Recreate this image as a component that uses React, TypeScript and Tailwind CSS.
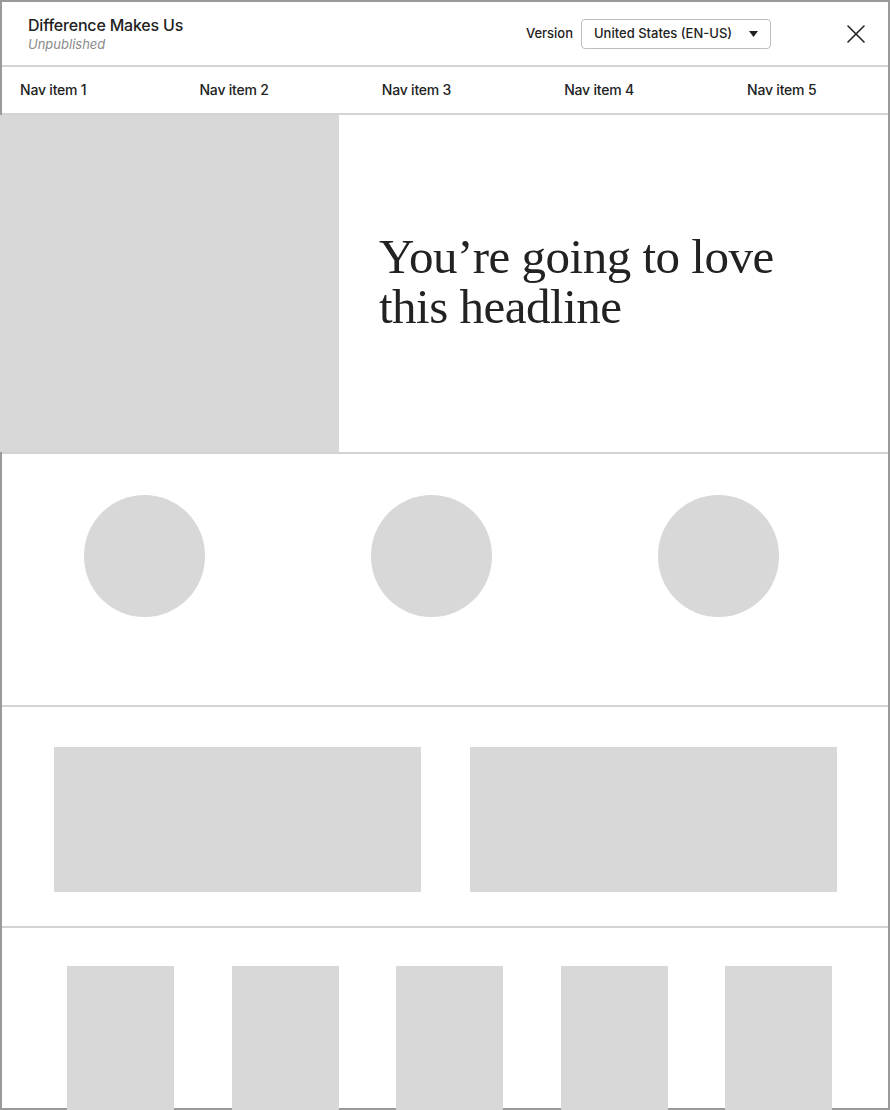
import { X } from 'lucide-react';

const navItems = ['Nav item 1', 'Nav item 2', 'Nav item 3', 'Nav item 4', 'Nav item 5'];

export default function App() {
  return (
    <div className="w-[890px] h-[1110px] overflow-hidden bg-white font-['Inter','Liberation_Sans',sans-serif] text-[#222]">
      <div className="h-[1110px] border-2 border-[#9a9a9a] flex flex-col">
        {/* Header */}
        <div className="h-[65px] shrink-0 flex items-center justify-between pl-[26px] pr-[16px] border-b-2 border-[#d3d3d3]">
          <div className="flex flex-col pt-[1px]">
            <span className="text-[16px] leading-[20px] font-medium tracking-[-0.2px]">Difference Makes Us</span>
            <span className="text-[13px] leading-[19px] italic text-[#8a8a8a]">Unpublished</span>
          </div>
          <div className="flex items-center">
            <span className="text-[13px] font-medium mr-[8px] ml-[1px]">Version</span>
            <div className="w-[190px] h-[30px] border-[1.5px] border-[#bdbdbd] rounded-[4px] flex items-center justify-between pl-[12px] pr-[12px]">
              <span className="text-[13px] font-medium">United States (EN-US)</span>
              <svg width="9" height="6" viewBox="0 0 9 6">
                <path d="M0 0 H9 L4.5 6 Z" fill="#222" />
              </svg>
            </div>
            <X className="ml-[69px] w-[32px] h-[32px] text-[#222]" strokeWidth={1.2} />
          </div>
        </div>

        {/* Nav */}
        <div className="h-[48px] shrink-0 flex items-center gap-[113px] pl-[18px] pb-[1px] border-b-2 border-[#d3d3d3]">
          {navItems.map((item) => (
            <span key={item} className="text-[14px] font-medium tracking-[-0.2px]">{item}</span>
          ))}
        </div>

        {/* Hero */}
        <div className="h-[339px] shrink-0 flex border-b-2 border-[#d3d3d3]">
          <div className="w-[339px] h-[337px] -ml-[2px] bg-[#d8d8d8] shrink-0" />
          <div className="flex items-center pl-[40px]">
            <h1 className="font-['Liberation_Serif','DejaVu_Serif',serif] text-[49px] leading-[50px] text-[#222] tracking-[-0.5px] pb-[4px]">
              <span className="block">You’re going to love</span>
              <span className="block">this headline</span>
            </h1>
          </div>
        </div>

        {/* Circles */}
        <div className="h-[253px] shrink-0 flex items-start gap-[166px] pl-[82px] pt-[41px] border-b-2 border-[#d3d3d3]">
          <div className="w-[121px] h-[122px] rounded-full bg-[#d8d8d8]" />
          <div className="w-[121px] h-[122px] rounded-full bg-[#d8d8d8]" />
          <div className="w-[121px] h-[122px] rounded-full bg-[#d8d8d8]" />
        </div>

        {/* Wide cards */}
        <div className="h-[221px] shrink-0 flex items-start gap-[49px] pl-[52px] pt-[40px] border-b-2 border-[#d3d3d3]">
          <div className="w-[367px] h-[145px] bg-[#d8d8d8]" />
          <div className="w-[367px] h-[145px] bg-[#d8d8d8]" />
        </div>

        {/* Tall cards */}
        <div className="flex items-start gap-[57.5px] pl-[65px] pt-[38px]">
          {[0, 1, 2, 3, 4].map((i) => (
            <div key={i} className="w-[107px] h-[200px] shrink-0 bg-[#d8d8d8]" />
          ))}
        </div>
      </div>
    </div>
  );
}
